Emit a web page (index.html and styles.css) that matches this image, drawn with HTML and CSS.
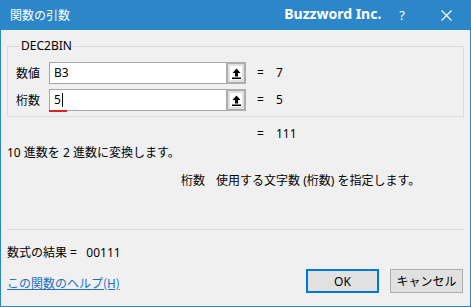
FILE: index.html
```html
<!DOCTYPE html>
<html lang="ja">
<head>
<meta charset="utf-8">
<link rel="stylesheet" href="styles.css">
</head>
<body>
<div class="window">
  <div class="titlebar">
    <span class="title">関数の引数</span>
    <span class="brand">Buzzword Inc.</span>
    <span class="help">?</span>
    <span class="close">
      <svg width="11" height="11" viewBox="0 0 11 11"><path d="M0.5 0.5L10.5 10.5M10.5 0.5L0.5 10.5" stroke="#fff" stroke-width="1.1" fill="none"/></svg>
    </span>
  </div>
  <div class="content">
    <fieldset class="group">
      <legend>DEC2BIN</legend>
      <div class="arg-row">
        <span class="arg-label">数値</span>
        <div class="field">
          <span class="field-text">B3</span>
          <span class="ref-btn"><span class="ref-inner"><svg width="9" height="11" viewBox="0 0 9 11"><path d="M4.5 0.5L0.5 5H3V8.5H6V5H8.5Z" fill="#000"/><rect x="0" y="9.5" width="9" height="1.5" fill="#000"/></svg></span></span>
        </div>
        <span class="eq">=</span>
        <span class="val">7</span>
      </div>
      <div class="arg-row">
        <span class="arg-label">桁数</span>
        <div class="field">
          <span class="field-text active">5<span class="caret"></span></span>
          <span class="ref-btn"><span class="ref-inner"><svg width="9" height="11" viewBox="0 0 9 11"><path d="M4.5 0.5L0.5 5H3V8.5H6V5H8.5Z" fill="#000"/><rect x="0" y="9.5" width="9" height="1.5" fill="#000"/></svg></span></span>
        </div>
        <span class="eq">=</span>
        <span class="val">5</span>
      </div>
    </fieldset>
    <div class="result-row">
      <span class="eq">=</span>
      <span class="val">111</span>
    </div>
    <p class="desc">10 進数を 2 進数に変換します。</p>
    <p class="param-desc"><span class="param-name">桁数</span>使用する文字数 (桁数) を指定します。</p>
    <div class="sep"></div>
    <p class="formula">数式の結果 =&nbsp;&nbsp; 00111</p>
    <div class="footer">
      <a class="help-link" href="#">この関数のヘルプ(H)</a>
      <button class="btn primary">OK</button>
      <button class="btn">キャンセル</button>
    </div>
  </div>
</div>
</body>
</html>
```
FILE: styles.css
```css
* { box-sizing: border-box; }
html, body { margin: 0; padding: 0; }
body {
  width: 471px;
  height: 307px;
  font-family: "Noto Sans", "Noto Sans CJK JP", sans-serif;
  font-size: 12px;
  color: #000;
  background: #f0f0f0;
  overflow: hidden;
}
.window {
  width: 471px;
  height: 307px;
  border: 1px solid #2b87c8;
  border-top: none;
  background: #f0f0f0;
  display: flex;
  flex-direction: column;
}
.titlebar {
  height: 30px;
  margin: 0 -1px;
  background: #2b87c8;
  color: #fff;
  display: flex;
  align-items: center;
  padding-left: 10px;
}
.title {
  font-family: "Noto Sans CJK JP", sans-serif;
  font-size: 12px;
  line-height: 16px;
  flex: 1;
}
.brand {
  font-family: "Noto Sans", sans-serif;
  font-weight: bold;
  font-size: 14px;
  line-height: 20px;
  margin-right: 18px;
  margin-top: -2px;
}
.help {
  font-size: 13px;
  line-height: 16px;
  margin-right: 36px;
}
.close {
  display: flex;
  margin-right: 19px;
}
.content {
  flex: 1;
  padding: 8px 6px 0 6px;
  display: flex;
  flex-direction: column;
}
.group {
  margin: 0;
  padding: 8px 0 5px 8px;
  border: 1px solid #dcdcdc;
  min-width: 0;
}
.group legend {
  padding: 0 1px;
  margin-left: 4px;
  line-height: 16px;
  font-size: 12px;
}
.arg-row {
  display: grid;
  grid-template-columns: 33px 197px 30px auto;
  align-items: center;
  height: 22px;
}
.arg-row + .arg-row { margin-top: 5px; }
.arg-label {
  font-family: "Noto Sans CJK JP", sans-serif;
  line-height: 16px;
}
.field {
  display: flex;
  height: 22px;
  background: #fff;
  border: 1px solid #a6a6a6;
}
.field-text {
  flex: 1;
  padding-left: 4px;
  line-height: 20px;
  font-size: 12px;
  position: relative;
}
.field-text.active::after {
  content: "";
  position: absolute;
  left: -1px;
  bottom: -2px;
  width: 18px;
  height: 2px;
  background: #e02020;
}
.caret {
  display: inline-block;
  width: 1px;
  height: 14px;
  background: #000;
  vertical-align: -3px;
  margin-left: 1px;
}
.ref-btn {
  width: 20px;
  margin: -1px -1px -1px 0;
  border: 2px solid #adadad;
  background: #e1e1e1;
  display: flex;
  align-items: center;
  justify-content: center;
}
.ref-inner {
  width: 12px;
  height: 14px;
  background: #fff;
  display: flex;
  align-items: center;
  justify-content: center;
}
.eq { line-height: 16px; }
.arg-row .eq { padding-left: 11px; }
.val { line-height: 16px; }
.result-row {
  display: flex;
  padding-left: 250px;
  margin-top: 9px;
  line-height: 16px;
  height: 16px;
}
.result-row .eq { width: 19px; }
.desc {
  margin: 3px 0 0 0;
  line-height: 16px;
}
.param-desc {
  margin: 12px 0 0 174px;
  line-height: 16px;
}
.param-name { margin-right: 11px; }
.sep {
  margin-top: 40px;
  height: 1px;
  background: #dcdcdc;
}
.formula {
  margin: 15px 0 0 0;
  line-height: 16px;
}
.footer {
  margin-top: 8px;
  display: flex;
  align-items: center;
}
.help-link {
  flex: 1;
  color: #1e71c2;
  text-decoration: underline;
  line-height: 16px;
  font-family: "Noto Sans CJK JP", sans-serif;
  margin-top: 4px;
}
.btn {
  width: 73px;
  height: 24px;
  margin: 0;
  font-family: "Noto Sans", "Noto Sans CJK JP", sans-serif;
  font-size: 12px;
  background: #e1e1e1;
  border: 1px solid #adadad;
  padding: 0;
  color: #000;
}
.btn.primary {
  border: 2px solid #0078d7;
  margin-right: 11px;
}
.footer .btn:last-child { margin-right: 1px; }
```
